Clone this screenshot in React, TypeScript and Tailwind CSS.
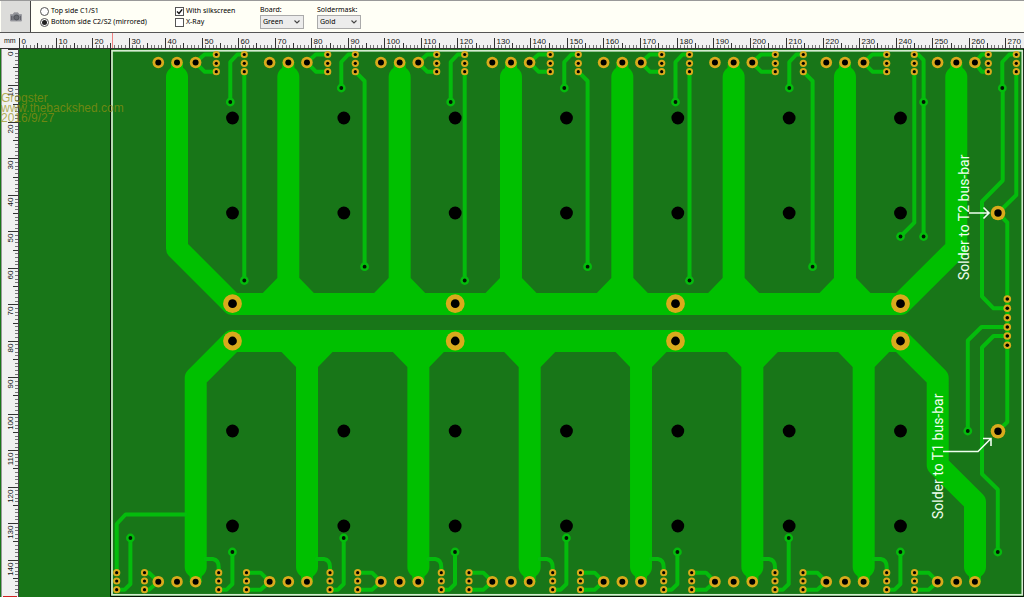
import type { ReactNode } from 'react';
import clsx from 'clsx';

// pixels per millimetre at the current zoom level
const SCALE = 3.653;
const PITCH = 111.33;
const WIDTH_TICKS = Array.from({ length: 275 }, (_, i) => i);
const HEIGHT_TICKS = Array.from({ length: 150 }, (_, i) => i);

const GOLD = '#d9aa1c';
const COPPER = '#00c000';
const TRACE = '#04bc0c';
const BOARD = '#187618';

type Point = [number, number];

const cells = [0, 1, 2, 3, 4, 5, 6, 7];

// header columns, top and bottom edge of the board
const topHeaders: Point[] = [
  [216.3, 244.3],
  [327.7, 355.3],
  [436.7, 464.7],
  [550.3, 578.3],
  [661.7, 689.5],
  [775.3, 803.3],
  [886.7, 914.3],
  [988.3, 1016.3],
];
const bottomHeaders: Point[] = [
  [116.7, 144.5],
  [218.7, 246.5],
  [330, 357.7],
  [441.3, 469],
  [552.7, 580.5],
  [663.7, 691.7],
  [775, 803],
  [886.7, 914.5],
];
const busPads = [232.5, 455.2, 675.5, 900.5];
const topRows = [54.5, 63.3, 71.7];
const bottomRows = [572.7, 581, 589.7];
const sideRows = [299, 308.3, 317.7, 327, 336, 345.3];

function Pad({ x, y, r, hole }: { x: number; y: number; r: number; hole: number }) {
  return (
    <>
      <circle cx={x} cy={y} r={r} fill={GOLD} />
      <circle cx={x} cy={y} r={hole} fill="#000" />
    </>
  );
}

function Via({ x, y }: { x: number; y: number }) {
  return (
    <>
      <circle cx={x} cy={y} r={4.4} fill={TRACE} />
      <circle cx={x} cy={y} r={1.9} fill="#021402" />
    </>
  );
}

function Copper() {
  return (
    <g fill="none" stroke={COPPER} strokeWidth={22} strokeLinecap="round" strokeLinejoin="round">
      {/* bus bars */}
      <path d="M177 77V248.500L232.500 304H900.500L956.300 248.500V77" />
      <path d="M195.700 567V378L232.500 341H900.500L937.700 378V465L975 502V567" />
      {cells.slice(1, 7).map((i) => {
        const up = 177 + PITCH * i;
        const down = 195.7 + PITCH * i;
        return (
          <g key={i}>
            <path d={`M${up} 77V304`} />
            <path d={`M${down} 567V341`} />
            <path
              d={`M${up - 11} 278L${up - 26} 293.500H${up + 26}L${up + 11} 278ZM${down - 11} 367L${down - 26} 351.500H${down + 26}L${down + 11} 367Z`}
              fill={COPPER}
              stroke="none"
            />
          </g>
        );
      })}
      {cells.map((i) => (
        <g key={i} strokeWidth={12} strokeLinecap="butt">
          <path d={`M${177 + PITCH * i} 62V72`} />
          <path d={`M${195.7 + PITCH * i} 571V582`} />
        </g>
      ))}
    </g>
  );
}

function Traces() {
  return (
    <g fill="none" stroke={TRACE} strokeWidth={4} strokeLinejoin="round" strokeLinecap="round">
      {topHeaders.map(([a, b], i) => {
        const pad = 195.5 + PITCH * i;
        const bend = i === 7 ? pad + 6 : pad + 8;
        return (
          <g key={i}>
            <path d={`M${a} 54.500H${bend + 1}L${pad} 62.500L${bend + 1} 71.700H${a}`} />
            {i !== 6 && (
              <path d={`M${b} 54.500H${b - 7}L${b - 14} 62V${i % 2 ? 88 : 102}`} />
            )}
            {i < 6 && i % 2 === 0 && <path d={`M${b} 71.700V280.500`} />}
            {i < 6 && i % 2 === 1 && <path d={`M${b} 71.700L${b + 9.3} 81V266.700`} />}
          </g>
        );
      })}
      {bottomHeaders.map(([a, b], i) => {
        const pad = 158.3 + PITCH * i;
        const bend = i === 0 ? 149 : pad - 9;
        return (
          <g key={i}>
            <path d={`M${b} 572.700H${bend}L${pad} 581.700L${bend} 589.700H${b}`} />
            <path d={`M${a} 589.700H${a + 8}L${a + 13.7} 584V${i % 2 ? 552 : 538}`} />
            {i > 0 && <path d={`M${a - 13} 559H${a - 6}Q${a} 560 ${a} 567V573`} />}
          </g>
        );
      })}
      <path d="M185 514.500H125.500L116.700 524V573" />
      <path d="M914.300 54.500H918L923.600 60V236.500" />
      <path d="M914.300 71.700V222.700L900.500 236.500" />
      <path d="M1002.700 88V180.500L982 201.500V296.500L993.500 308.300H1007.300" />
      <path d="M1016.300 71.700V195L998 213L1007.300 222.500V422L998 431" />
      <path d="M1007.300 327H981.500L967.800 340.500V431" />
      <path d="M1007.300 336H993.500L982 347.500V474L997.800 489.500V552" />
    </g>
  );
}

function Vias() {
  return (
    <g>
      {topHeaders.map(([, b], i) => (
        <g key={i}>
          <Via x={i === 6 ? b + 9.3 : b - 14} y={i % 2 ? 88 : 102} />
          {i < 6 && <Via x={i % 2 ? b + 9.3 : b} y={i % 2 ? 266.7 : 280.5} />}
        </g>
      ))}
      {bottomHeaders.map(([a], i) => (
        <Via key={i} x={a + 13.7} y={i % 2 ? 552 : 538} />
      ))}
      <Via x={900.5} y={236.5} />
      <Via x={923.6} y={236.5} />
      <Via x={967.8} y={431} />
      <Via x={997.8} y={552} />
    </g>
  );
}

function Pads() {
  return (
    <g>
      {cells.map((i) =>
        [158.3, 177, 195.6].map((x) => (
          <g key={`${i}-${x}`}>
            <Pad x={x + PITCH * i} y={62.5} r={5.8} hole={3} />
            <Pad x={x + PITCH * i} y={581.7} r={5.8} hole={3} />
          </g>
        ))
      )}
      {topHeaders.flat().map((x) => topRows.map((y) => <Pad key={`${x}-${y}`} x={x} y={y} r={3.6} hole={1.6} />))}
      {bottomHeaders.flat().map((x) =>
        bottomRows.map((y) => <Pad key={`${x}-${y}`} x={x} y={y} r={3.6} hole={1.6} />)
      )}
      {sideRows.map((y) => (
        <Pad key={y} x={1007.3} y={y} r={3.8} hole={1.8} />
      ))}
      {busPads.map((x) => (
        <g key={x}>
          <Pad x={x} y={303.7} r={9.4} hole={4.4} />
          <Pad x={x} y={341} r={9.4} hole={4.4} />
        </g>
      ))}
      <Pad x={998} y={213} r={7.3} hole={3.7} />
      <Pad x={998} y={431.3} r={7.3} hole={3.7} />
    </g>
  );
}

function Silkscreen() {
  return (
    <g fill="none" stroke="#f0fff0" strokeWidth={1.6}>
      <path d="M969 213H989M983.500 207.500L989 213L983.500 218.500" />
      <path d="M943 451.500H978L991 438.500M983 438.500H991V446" />
      <g fill="#f0fff0" stroke="none" className="font-[Roboto,sans-serif] text-[14px]">
        <text transform="translate(969 280) rotate(-90)">Solder to T2 bus-bar</text>
        <text transform="translate(943 519) rotate(-90)">Solder to T1 bus-bar</text>
      </g>
    </g>
  );
}

function BoardView() {
  return (
    <svg className="block h-full w-full" role="img" aria-label="Board preview">
      <g transform="translate(-19 -49)">
        <path d="M110.500 49V596.500H1023.500V49" fill="none" stroke="#001000" />
        <rect x={112} y={50.8} width={910.3} height={544} fill={BOARD} stroke="#d5ecd0" strokeWidth={1.7} />
        <Copper />
        <Traces />
        {cells.slice(0, 7).map((i) =>
          [118, 213, 431, 526].map((y) => (
            <circle key={`${i}-${y}`} cx={232.5 + PITCH * i} cy={y} r={6.4} fill="#000" />
          ))
        )}
        <Vias />
        <Pads />
        <Silkscreen />
      </g>
    </svg>
  );
}

function HorizontalRuler() {
  return (
    <svg className="block h-full min-w-0 flex-1 font-['Liberation_Sans',sans-serif] text-[8px]" aria-hidden="true">
      {WIDTH_TICKS.map((mm) => {
        const x = Math.round(mm * SCALE) + 0.5;
        const top = mm % 10 === 0 ? 5 : mm % 5 === 0 ? 10 : 12;
        return (
          <g key={mm}>
            <path d={`M${x} ${top}V15`} stroke={mm % 5 === 0 ? '#333' : '#777'} />
            {mm % 10 === 0 && (
              <text x={x + 2} y={11} fill="#111">
                {mm}
              </text>
            )}
          </g>
        );
      })}
      <path d="M93.500 0V15" stroke="#f08080" />
    </svg>
  );
}

function VerticalRuler() {
  return (
    <svg className="block h-full w-full font-['Liberation_Sans',sans-serif] text-[8px]" aria-hidden="true">
      {HEIGHT_TICKS.map((mm) => {
        const y = Math.round(mm * 3.647) + 0.5;
        const left = mm % 10 === 0 ? 6 : mm % 5 === 0 ? 11 : 13;
        return (
          <g key={mm}>
            <path d={`M${left} ${y}H16`} stroke={mm % 5 === 0 ? '#333' : '#777'} />
            {mm % 10 === 0 && (
              <text transform={`translate(11 ${y + 2}) rotate(-90)`} textAnchor="end" fill="#111">
                {mm}
              </text>
            )}
          </g>
        );
      })}
      <path d="M1 547.500H15" stroke="#d02020" />
    </svg>
  );
}

function Option({ type, name, label, checked }: { type: 'radio' | 'checkbox'; name: string; label: string; checked?: boolean }) {
  return (
    <label className="flex h-[11px] items-center gap-0.5 whitespace-nowrap">
      <span className="grid size-[9px] shrink-0">
        <input
          type={type}
          name={name}
          defaultChecked={checked}
          className={clsx(
            'peer col-start-1 row-start-1 size-[9px] appearance-none border border-[#555] bg-white',
            type === 'radio' && 'rounded-full'
          )}
        />
        <svg
          viewBox="0 0 9 9"
          className="pointer-events-none invisible col-start-1 row-start-1 size-[9px] peer-checked:visible"
        >
          {type === 'radio' ? (
            <circle cx="4.500" cy="4.500" r="2.500" fill="#222" />
          ) : (
            <path d="M2 4.500L4 6.500L7.200 2.300" fill="none" stroke="#111" strokeWidth="1.400" />
          )}
        </svg>
      </span>
      {label}
    </label>
  );
}

function Picker({ id, label, options }: { id: string; label: string; options: string[] }) {
  return (
    <div className="flex w-[57px] flex-col">
      <label htmlFor={id} className="leading-[10px]">
        {label}
      </label>
      <div className="grid w-11 items-center">
        <select
          id={id}
          className="col-start-1 row-start-1 h-[14px] w-full appearance-none border border-[#aaa] bg-[#ececec] pl-0.5 leading-[12px]"
        >
          {options.map((option) => (
            <option key={option}>{option}</option>
          ))}
        </select>
        <svg viewBox="0 0 6 4" className="pointer-events-none col-start-1 row-start-1 mr-1 h-1 w-1.5 justify-self-end">
          <path d="M0.500 0.500L3 3L5.500 0.500" fill="none" stroke="#444" strokeWidth="1.100" />
        </svg>
      </div>
    </div>
  );
}

function Group({ className, children }: { className: string; children: ReactNode }) {
  return <div className={clsx('flex flex-col justify-center', className)}>{children}</div>;
}

function Toolbar() {
  return (
    <header className="flex h-[33px] shrink-0 border-t border-b border-t-[#999] border-b-[#555] bg-[#fffff6] font-['Noto_Sans',sans-serif] text-[7px] text-black">
      <button
        type="button"
        aria-label="Save picture"
        className="ml-px flex w-[30px] items-center justify-center border-r border-[#444] bg-[#dcdcda]"
      >
        <svg viewBox="0 0 12 10" className="h-2.5 w-3">
          <path d="M0.500 2.500H3L4 0.800H8L9 2.500H11.500V9H0.500Z" fill="#8b8e94" stroke="#9d9da2" />
          <circle cx="6.500" cy="5.500" r="2.500" fill="#66696f" stroke="#494b52" strokeWidth="0.800" />
          <path d="M1.500 4V8M3 4V8M10.500 4V8" stroke="#55555b" strokeWidth="0.700" />
        </svg>
      </button>
      <Group className="ml-[9px] w-[135px]">
        <Option type="radio" name="side" label="Top side C1/S1" />
        <Option type="radio" name="side" label="Bottom side C2/S2 (mirrored)" checked />
      </Group>
      <Group className="w-[85px]">
        <Option type="checkbox" name="silkscreen" label="With silkscreen" checked />
        <Option type="checkbox" name="xray" label="X-Ray" />
      </Group>
      <div className="flex pt-1">
        <Picker id="board" label="Board:" options={['Green', 'Red', 'Blue', 'Black']} />
        <Picker id="soldermask" label="Soldermask:" options={['Gold', 'Silver']} />
      </div>
    </header>
  );
}

export default function App() {
  return (
    <div className="relative flex h-screen flex-col overflow-hidden bg-[#187618]">
      <Toolbar />
      <div className="flex h-4 shrink-0 border-b border-[#333] bg-[#f1f1f1]">
        <span className="w-[19px] shrink-0 pl-1 font-['Liberation_Sans',sans-serif] text-[7px] leading-4 text-[#111]">
          mm
        </span>
        <HorizontalRuler />
      </div>
      <div className="flex min-h-0 flex-1">
        <div className="ml-px w-[18px] shrink-0 border-r border-l border-r-[#444] border-l-[#999] bg-[#f1f1f1]">
          <VerticalRuler />
        </div>
        <main className="min-w-0 flex-1">
          <BoardView />
        </main>
      </div>
      {/* watermark */}
      <p className="pointer-events-none absolute top-[93px] left-px font-['Liberation_Sans',sans-serif] text-[12px] leading-[10px] text-[#969010]/70">
        Grogster
        <br />
        www.thebackshed.com
        <br />
        2016/9/27
      </p>
    </div>
  );
}
